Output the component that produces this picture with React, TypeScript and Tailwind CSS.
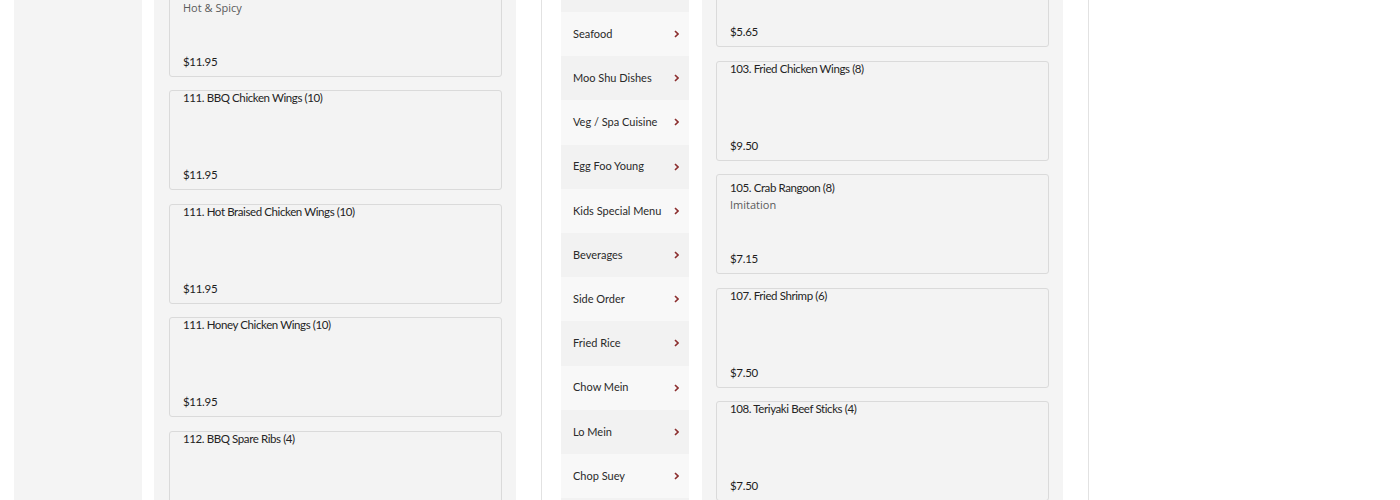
type Item = { title: string; desc?: string; price: string };

const leftItems: Item[] = [
  { title: "111. General Tso's Chicken Wings (10)", desc: "Hot & Spicy", price: "$11.95" },
  { title: "111. BBQ Chicken Wings (10)", price: "$11.95" },
  { title: "111. Hot Braised Chicken Wings (10)", price: "$11.95" },
  { title: "111. Honey Chicken Wings (10)", price: "$11.95" },
  { title: "112. BBQ Spare Ribs (4)", price: "$11.95" },
];

const rightItems: Item[] = [
  { title: "102. Egg Roll (2)", price: "$5.65" },
  { title: "103. Fried Chicken Wings (8)", price: "$9.50" },
  { title: "105. Crab Rangoon (8)", desc: "Imitation", price: "$7.15" },
  { title: "107. Fried Shrimp (6)", price: "$7.50" },
  { title: "108. Teriyaki Beef Sticks (4)", price: "$7.50" },
];

const categories = [
  "Soup",
  "Seafood",
  "Moo Shu Dishes",
  "Veg / Spa Cuisine",
  "Egg Foo Young",
  "Kids Special Menu",
  "Beverages",
  "Side Order",
  "Fried Rice",
  "Chow Mein",
  "Lo Mein",
  "Chop Suey",
  "Chef's Specials",
];

const titleFont = "font-['Lato','Liberation_Sans',sans-serif]";

function MenuCard({ item }: { item: Item }) {
  return (
    <div className="relative h-[100px] shrink-0 rounded-[3px] border border-[#dadada] bg-[#f3f3f3] px-[13px]">
      <div
        className={`${titleFont} ${item.desc ? "pt-[6px]" : "pt-0"} text-[11.5px] leading-[14px] tracking-[-0.4px] text-[#242424]`}
      >
        {item.title}
      </div>
      {item.desc && (
        <div className="mt-[2px] font-['Open_Sans',sans-serif] text-[11px] leading-[16px] text-[#5a5a5a]">
          {item.desc}
        </div>
      )}
      <div
        className={`${titleFont} absolute bottom-[6px] left-[13px] text-[11.5px] leading-[16px] tracking-[-0.3px] text-[#1c1c1c]`}
      >
        {item.price}
      </div>
    </div>
  );
}

function Chevron() {
  return (
    <svg width="5" height="8" viewBox="0 0 5 8" className="shrink-0">
      <polyline points="1,1 4,4 1,7" fill="none" stroke="#8c2f2f" strokeWidth="1.6" />
    </svg>
  );
}

export default function App() {
  return (
    <div className="flex h-[500px] w-[1400px] overflow-hidden bg-white">
      <div className="ml-[14px] w-[128px] shrink-0 bg-[#f4f4f4]" />

      <div className="ml-[12px] w-[362px] shrink-0 bg-[#f4f4f4] pl-[15px] pr-[14px]">
        <div className="mt-[-23.5px] flex flex-col gap-[13.5px]">
          {leftItems.map((it) => (
            <MenuCard key={it.title} item={it} />
          ))}
        </div>
      </div>

      <div className="ml-[25px] flex w-[548px] shrink-0 border-x border-[#e2e2e2] pl-[19px] pr-[25px]">
        <div className="mt-[-32.2px] w-[128px] shrink-0">
          {categories.map((c, i) => (
            <div
              key={c}
              className={`flex h-[44.2px] items-center justify-between pl-[12px] pr-[10px] ${
                i % 2 === 0 ? "bg-[#f2f2f2]" : "bg-[#f8f8f8]"
              }`}
            >
              <span className={`${titleFont} text-[11px] text-[#2a2a2a]`}>{c}</span>
              <Chevron />
            </div>
          ))}
        </div>

        <div className="ml-[13px] w-[361px] shrink-0 bg-[#f4f4f4] px-[14px]">
          <div className="mt-[-53px] flex flex-col gap-[13.5px]">
            {rightItems.map((it) => (
              <MenuCard key={it.title} item={it} />
            ))}
          </div>
        </div>
      </div>
    </div>
  );
}
